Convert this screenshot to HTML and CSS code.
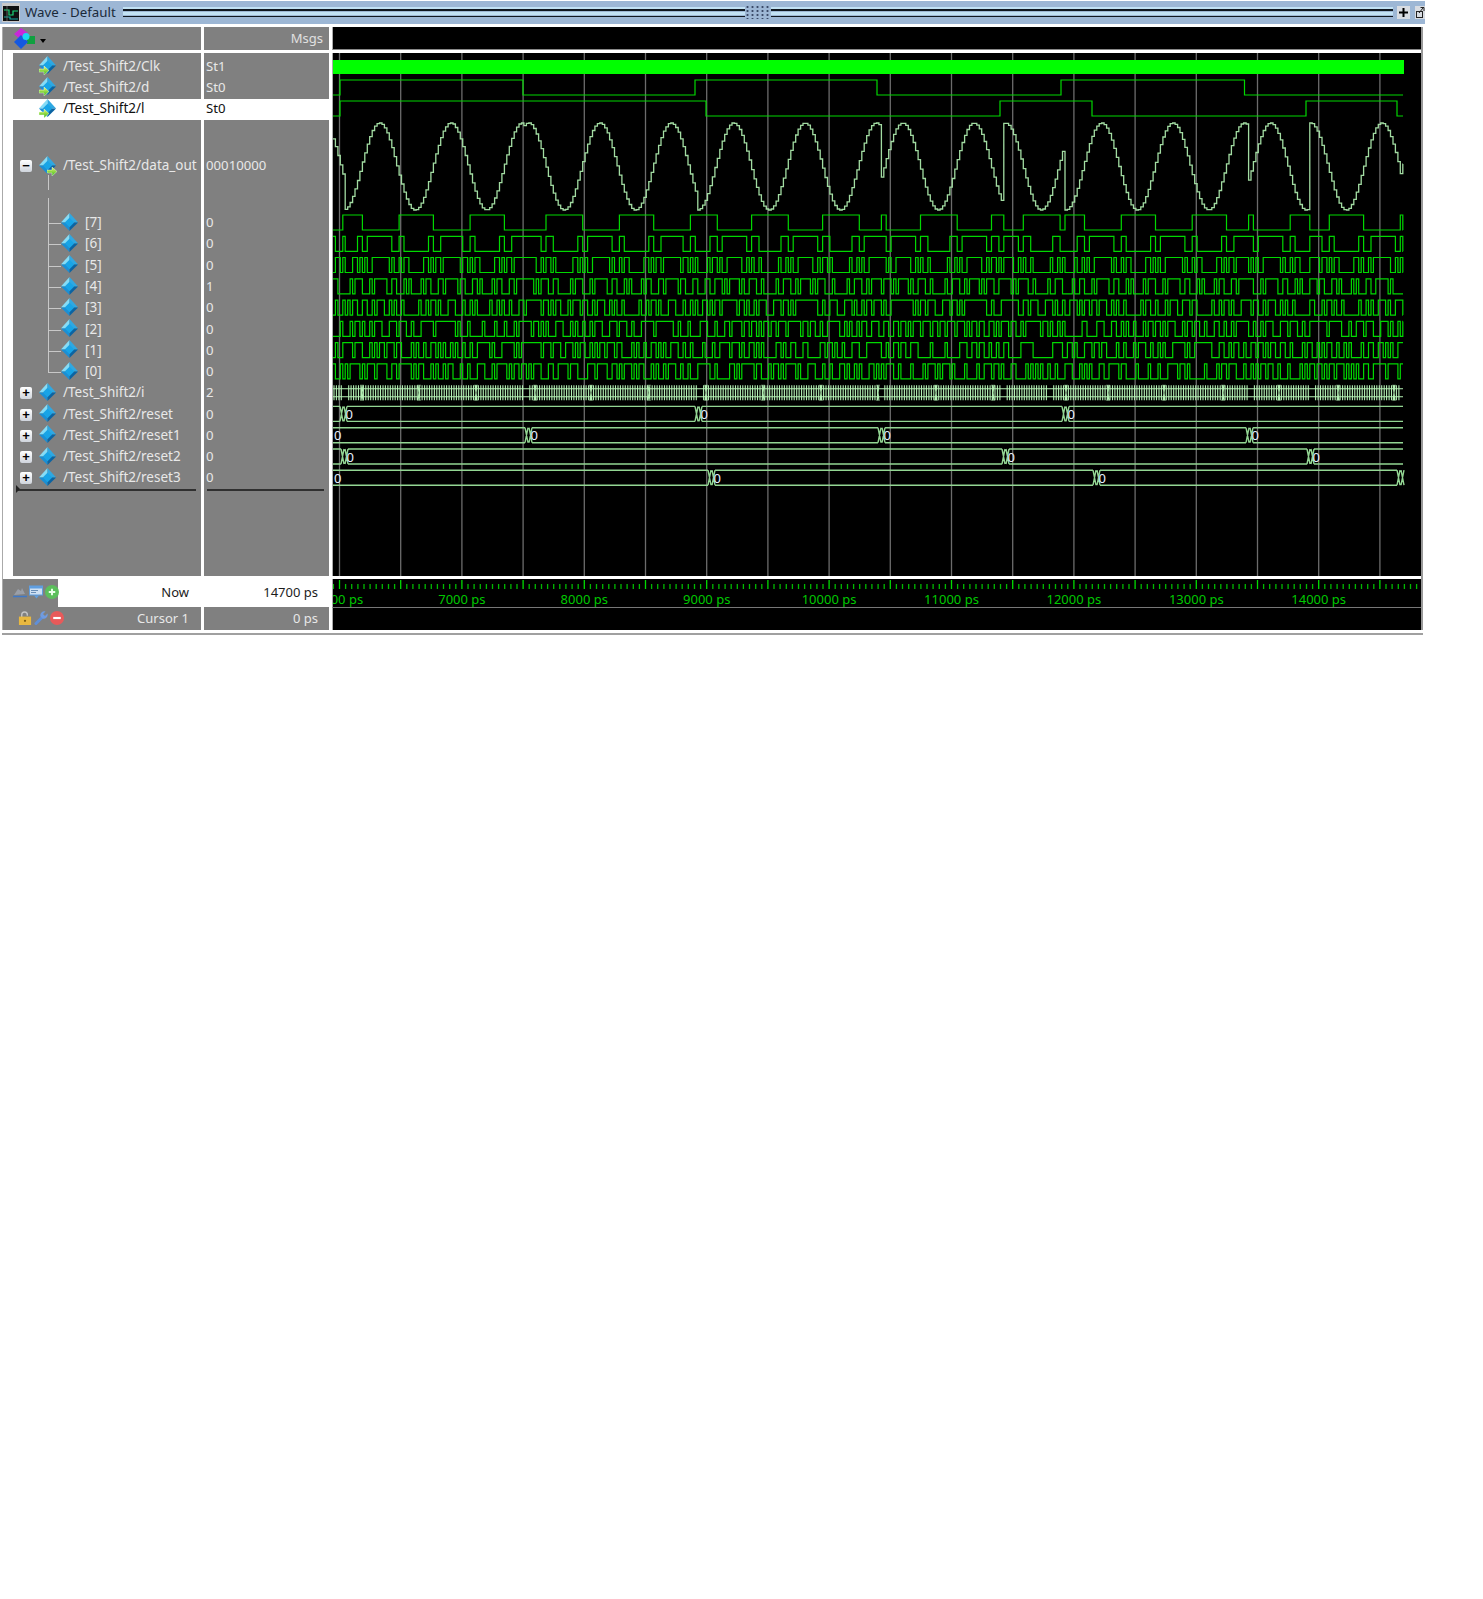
FILE: index.html
```html
<!DOCTYPE html>
<html lang="en">
<head>
    <meta charset="UTF-8">
    <title>Wave - Default</title>
    <link rel="stylesheet" href="styles.css">
</head>
<body>
    <svg class="defs" width="0" height="0">
        <defs>
            <linearGradient id="arrow-fill" x1="0" y1="0" x2="0" y2="1">
                <stop offset="0" stop-color="#e8f870"/>
                <stop offset="1" stop-color="#38b818"/>
            </linearGradient>
            <symbol id="diamond" viewBox="0 0 20 20">
                <polygon points="10,0 1,10 10,10" fill="#86dcf6"/>
                <polygon points="10,0 19,10 10,10" fill="#2fa8e2"/>
                <polygon points="1,10 10,19 10,10" fill="#1b8fd4"/>
                <polygon points="19,10 10,19 10,10" fill="#0c64a2"/>
                <polygon points="10,5 15,10 10,15 5,10" fill="#18a4e6"/>
            </symbol>
            <symbol id="arrow" viewBox="0 0 10 9">
                <path d="M0 3h5V0l5 4.500L5 9V6H0z" fill="url(#arrow-fill)" stroke="#f0fff0" stroke-width="0.400"/>
            </symbol>
        </defs>
    </svg>

    <div class="window">
        <header class="titlebar">
            <svg class="title-icon" viewBox="0 0 18 19">
                <rect width="18" height="19" fill="#c8c8c8"/>
                <rect x="1" y="3" width="16" height="15" fill="#101010"/>
                <path d="M2 7h5v5h4V8h5" fill="none" stroke="#18d878" stroke-width="1.200"/>
                <path d="M2 14h6v2h8" fill="none" stroke="#12a8a0" stroke-width="1.200"/>
                <path d="M5 3v15" stroke="#707070" stroke-width="0.800"/>
            </svg>
            <span class="title-text">Wave - Default</span>
            <div class="title-strip"><div class="grip"></div></div>
            <button class="title-btn plus-btn"><svg viewBox="0 0 13 13"><path d="M6.500 2v9M2 6.500h9" stroke="#000" stroke-width="2"/></svg></button>
            <button class="title-btn undock-btn"><svg viewBox="0 0 10 13"><rect x="1.500" y="5.500" width="6" height="6" fill="none" stroke="#222"/><path d="M4 7l4-5M5.500 1.500H9V5" fill="none" stroke="#222"/></svg></button>
        </header>

        <div class="panes">
            <div class="pane-row head-row">
                <div class="cell names-head">
                    <svg class="format-icon" viewBox="0 0 22 22">
                        <polygon points="7,0 14,5 7,12 0,6" fill="#c828d8"/>
                        <rect x="13" y="8" width="8" height="8" fill="#10a040"/>
                        <polygon points="7,7 14,14 7,21 0,14" fill="#1458e0"/>
                        <circle cx="12" cy="8.500" r="3.500" fill="#18d8f0"/>
                    </svg>
                    <span class="drop-caret"></span>
                </div>
                <div class="cell values-head">Msgs</div>
                <div class="cell wave-head"></div>
            </div>

            <div class="pane-row body-row">
                <div class="cell names">
                    <div class="row leaf"><svg class="sig-icon"><use href="#diamond"/></svg><svg class="in-arrow"><use href="#arrow"/></svg><span>/Test_Shift2/Clk</span></div>
                    <div class="row leaf"><svg class="sig-icon"><use href="#diamond"/></svg><svg class="in-arrow"><use href="#arrow"/></svg><span>/Test_Shift2/d</span></div>
                    <div class="row leaf selected"><svg class="sig-icon"><use href="#diamond"/></svg><svg class="in-arrow"><use href="#arrow"/></svg><span>/Test_Shift2/l</span></div>
                    <div class="row group tall">
                        <span class="expander">&minus;</span><svg class="sig-icon"><use href="#diamond"/></svg><svg class="out-arrow"><use href="#arrow"/></svg><span>/Test_Shift2/data_out</span>
                    </div>
                    <div class="row child"><svg class="sig-icon"><use href="#diamond"/></svg><span>[7]</span></div>
                    <div class="row child"><svg class="sig-icon"><use href="#diamond"/></svg><span>[6]</span></div>
                    <div class="row child"><svg class="sig-icon"><use href="#diamond"/></svg><span>[5]</span></div>
                    <div class="row child"><svg class="sig-icon"><use href="#diamond"/></svg><span>[4]</span></div>
                    <div class="row child"><svg class="sig-icon"><use href="#diamond"/></svg><span>[3]</span></div>
                    <div class="row child"><svg class="sig-icon"><use href="#diamond"/></svg><span>[2]</span></div>
                    <div class="row child"><svg class="sig-icon"><use href="#diamond"/></svg><span>[1]</span></div>
                    <div class="row child last"><svg class="sig-icon"><use href="#diamond"/></svg><span>[0]</span></div>
                    <div class="row group"><span class="expander">+</span><svg class="sig-icon"><use href="#diamond"/></svg><span>/Test_Shift2/i</span></div>
                    <div class="row group"><span class="expander">+</span><svg class="sig-icon"><use href="#diamond"/></svg><span>/Test_Shift2/reset</span></div>
                    <div class="row group"><span class="expander">+</span><svg class="sig-icon"><use href="#diamond"/></svg><span>/Test_Shift2/reset1</span></div>
                    <div class="row group"><span class="expander">+</span><svg class="sig-icon"><use href="#diamond"/></svg><span>/Test_Shift2/reset2</span></div>
                    <div class="row group"><span class="expander">+</span><svg class="sig-icon"><use href="#diamond"/></svg><span>/Test_Shift2/reset3</span></div>
                    <div class="end-line names-end"></div>
                </div>
                <div class="cell values">
                    <div class="row">St1</div>
                    <div class="row">St0</div>
                    <div class="row selected">St0</div>
                    <div class="row tall">00010000</div>
                    <div class="row">0</div>
                    <div class="row">0</div>
                    <div class="row">0</div>
                    <div class="row">1</div>
                    <div class="row">0</div>
                    <div class="row">0</div>
                    <div class="row">0</div>
                    <div class="row">0</div>
                    <div class="row">2</div>
                    <div class="row">0</div>
                    <div class="row">0</div>
                    <div class="row">0</div>
                    <div class="row">0</div>
                    <div class="end-line"></div>
                </div>
                <div class="cell wave-cell">
                    <svg id="waves" viewBox="333 53 1088 523"></svg>
                </div>
            </div>

            <div class="pane-row now-row">
                <div class="cell now-label">
                    <div class="now-icons">
                        <svg class="tool-icon" viewBox="0 0 14 12"><path d="M1 9l4-6 3 2 1-3 3 6z" fill="#9a9fa8"/><path d="M0 10.500h14" stroke="#3f78c8" stroke-width="1.500"/></svg>
                        <svg class="tool-icon" viewBox="0 0 14 13"><rect width="14" height="10" fill="#5f9ee0"/><rect x="1" y="3" width="12" height="6" fill="#cfe0f2"/><path d="M2 5h7M2 7h5" stroke="#6a8fb8"/><path d="M5 10h5l-2.500 3z" fill="#5f9ee0"/></svg>
                        <svg class="tool-icon" viewBox="0 0 13 13"><circle cx="6.500" cy="6.500" r="6.500" fill="#5cbf5c"/><path d="M6.500 3.500v6M3.500 6.500h6" stroke="#eaffea" stroke-width="1.800"/></svg>
                    </div>
                    <span class="time-label">Now</span>
                </div>
                <div class="cell now-value">14700 ps</div>
                <div class="cell ruler-cell"><svg id="ruler" viewBox="333 578 1088 28"></svg></div>
            </div>

            <div class="pane-row cursor-row">
                <div class="cell cursor-label">
                    <div class="cursor-icons">
                        <svg class="tool-icon" viewBox="0 0 13 15"><path d="M3 7V4a3 3 0 0 1 6 0v1" fill="none" stroke="#c4c4c4" stroke-width="1.500"/><rect y="6" width="13" height="9" fill="#e8b840"/><circle cx="6.500" cy="10.500" r="1.200" fill="#7a5a10"/></svg>
                        <svg class="tool-icon" viewBox="0 0 14 14"><path d="M2 12.500L8 6.500" stroke="#5f8fd8" stroke-width="3" stroke-linecap="round"/><path d="M6.500 5.500a4 4 0 0 1 5-5L9 3l2 2 2.500-2.500a4 4 0 0 1-5 5z" fill="#6f9be0"/></svg>
                        <svg class="tool-icon" viewBox="0 0 13 13"><circle cx="6.500" cy="6.500" r="6.500" fill="#e85a5a"/><path d="M3 6.500h7" stroke="#fff" stroke-width="2"/></svg>
                    </div>
                    <span class="time-label">Cursor 1</span>
                </div>
                <div class="cell cursor-value">0 ps</div>
                <div class="cell cursor-wave"></div>
            </div>
        </div>
        <div class="scroll-strip"></div>
    </div>
    <script src="waves.js"></script>
</body>
</html>
```

FILE: styles.css
```css
body {
    margin: 0;
    background: #fff;
    font-family: "Noto Sans", "Open Sans", sans-serif;
    font-size: 13px;
    color: #e8e8e8;
}

.defs {
    display: block;
    height: 0;
}

.window {
    width: 1425px;
    padding-top: 1px;
}

/* title bar */
.titlebar {
    display: flex;
    align-items: center;
    height: 23px;
    background: #9db7d5;
    padding-left: 2px;
}

.title-icon {
    width: 18px;
    height: 19px;
    flex: none;
}

.title-text {
    margin: 0 0 2px 5px;
    width: 98px;
    font-size: 13.300px;
    color: #1a2a3a;
}

.title-strip {
    flex: 1;
    height: 11px;
    margin-top: -1px;
    background: linear-gradient(#c2e2f4 0 2.500px, #101820 2.500px 4px, #9db7d5 4px 5px, #c2e2f4 5px 8px, #9db7d5 8px 9px, #101820 9px 10px, #9db7d5 10px);
    display: flex;
    justify-content: center;
}

.grip {
    width: 26px;
    height: 14px;
    margin-top: -2px;
    background-color: #9db7d5;
    background-image: radial-gradient(#3a4a68 1px, transparent 1.300px);
    background-size: 5px 4px;
}

.title-btn {
    width: 13px;
    height: 13px;
    padding: 0;
    border: none;
    background: #d8dce2;
    flex: none;
    margin-left: 4px;
}

.undock-btn {
    width: 10px;
    margin-left: 5px;
}

.title-btn svg {
    display: block;
    width: 100%;
    height: 100%;
}

/* panes */
.panes {
    margin: 3px 2px 0 2px;
    border-left: 1px solid #aaa;
    border-right: 2px solid #999;
    background: #fff;
}

.pane-row {
    display: grid;
    grid-template-columns: 198px 125px 1089px;
    column-gap: 3px;
}

.head-row {
    height: 23px;
    margin-bottom: 3px;
}

.body-row {
    height: 523px;
    margin-bottom: 3px;
}

.now-row {
    height: 28px;
}

.cursor-row {
    height: 23px;
}

.cell {
    background: #808080;
    box-sizing: border-box;
}

.names-head {
    display: flex;
    align-items: center;
    padding-left: 11px;
}

.format-icon {
    width: 22px;
    height: 22px;
}

.drop-caret {
    margin-left: 4px;
    margin-top: 4px;
    border-top: 4px solid #000;
    border-left: 3px solid transparent;
    border-right: 3px solid transparent;
}

.values-head {
    text-align: right;
    padding-right: 6px;
    line-height: 23px;
    color: #e0e0e0;
}

.wave-head,
.wave-cell,
.ruler-cell,
.cursor-wave {
    background: #000;
    border-left: 1px solid #aaa;
}

.wave-head {
    border-bottom: 1px solid #888;
}

#waves,
#ruler {
    display: block;
    width: 1088px;
}

#waves {
    height: 523px;
}

#ruler {
    height: 28px;
}

/* signal rows */
.names {
    border-left: 10px solid #fff;
    padding-top: 3px;
    font-size: 13.500px;
}

.values {
    padding-top: 3px;
    font-size: 13.200px;
}

.row {
    position: relative;
    display: flex;
    align-items: center;
    box-sizing: border-box;
    height: 21.270px;
    padding-bottom: 2px;
    white-space: nowrap;
}

.values .row {
    padding-left: 2px;
}

.row.tall {
    height: 92.800px;
}

.row.selected {
    background: #fff;
    color: #111;
}

.sig-icon {
    flex: none;
    width: 19px;
    height: 19px;
    margin-right: 6px;
}

.leaf {
    padding-left: 25px;
}

.group {
    padding-left: 7px;
}

.child {
    padding-left: 47px;
}

.expander {
    flex: none;
    width: 12px;
    height: 12px;
    margin-right: 6px;
    margin-top: 2px;
    border-radius: 2px;
    background: linear-gradient(#fff, #cfd4dc);
    color: #000;
    font: bold 13px/12px "Liberation Sans", sans-serif;
    text-align: center;
}

.in-arrow,
.out-arrow {
    position: absolute;
    width: 10px;
    height: 9px;
    top: 10px;
    left: 26px;
}

.tall .out-arrow {
    top: 47px;
    left: 34px;
}

/* tree lines */
.child::before {
    content: "";
    position: absolute;
    left: 35px;
    top: 0;
    width: 12px;
    height: 50%;
    border-left: 1px solid #c8c8c8;
    border-bottom: 1px solid #c8c8c8;
}

.child::after {
    content: "";
    position: absolute;
    left: 35px;
    top: 50%;
    bottom: 0;
    border-left: 1px solid #c8c8c8;
}

.child.last::after {
    display: none;
}

.group.tall::before {
    content: "";
    position: absolute;
    left: 35px;
    top: 55px;
    height: 15px;
    border-left: 1px solid #c8c8c8;
}

.group.tall::after {
    content: "";
    position: absolute;
    left: 35px;
    bottom: 0;
    height: 15px;
    border-left: 1px solid #c8c8c8;
}

.end-line {
    height: 1.500px;
    margin: 0 5px 0 3px;
    background: #303030;
}

.names-end {
    position: relative;
    margin: 0 5px 0 5px;
}

.names-end::before {
    content: "";
    position: absolute;
    left: -2px;
    top: -4px;
    border-left: 4px solid #222;
    border-top: 4px solid transparent;
    border-bottom: 4px solid transparent;
}

/* now and cursor rows */
.now-label,
.cursor-label,
.now-value,
.cursor-value {
    display: flex;
    align-items: center;
    justify-content: space-between;
    padding-right: 12px;
    padding-bottom: 2px;
}

.now-label,
.now-value {
    background: #fff;
    color: #1c1c1c;
}

.now-value,
.cursor-value {
    justify-content: flex-end;
    padding-right: 11px;
}

.now-icons {
    display: flex;
    align-items: center;
    gap: 2px;
    align-self: stretch;
    width: 55px;
    margin-bottom: -2px;
    padding: 0 0 2px 10px;
    box-sizing: border-box;
    background: #808080;
}

.cursor-icons {
    display: flex;
    align-items: center;
    gap: 2px;
    padding-left: 15px;
}

.tool-icon {
    width: 14px;
    height: 14px;
    flex: none;
}

.cursor-wave {
    border-top: 1px solid #777;
}

.scroll-strip {
    margin: 0 2px;
    width: 1421px;
    height: 5px;
    box-sizing: border-box;
    background: #fff;
    border-bottom: 2px solid #a0a0a0;
}

/* waveform strokes */
.grid-line {
    stroke: #6c6c6c;
    stroke-width: 1.300;
}

.sig {
    fill: none;
    stroke: #00d800;
    stroke-width: 1.200;
}

.clock-bar {
    fill: #00ff00;
}

.analog {
    fill: none;
    stroke: #a2dca2;
    stroke-width: 1.300;
}

.bus {
    fill: none;
    stroke: #93d693;
    stroke-width: 1.400;
}

.count-bus {
    fill: none;
    stroke: #b4f0b4;
    stroke-width: 1.100;
}

.bus-value {
    fill: #e8f0ff;
    font-size: 13px;
}

.tick {
    stroke: #00b800;
    stroke-width: 1.300;
}

.tick.major {
    stroke: #00dc00;
}

.ruler-label {
    fill: #00c800;
    font-size: 13px;
    text-anchor: middle;
}
```

FILE: waves.js
```js
// draws the traces: data_out is a stepped sine, the bit rows are its two's complement bits
const START = 333;
const END = 1403;
const STEP = 2.448;
const PERIOD = 71.3;
const BIT_TOPS = [215, 236.3, 257.5, 278.8, 300.1, 321.4, 342.6, 363.9];

// [x where the counter was reset, x of the next sine peak]
const segments = [
    [333, 323], [344, 379], [523, 528], [697, 733], [880, 902],
    [1002, 1005], [1063, 1101], [1247, 1270], [1308, 1310], [1398, 1420]
];

function sampleAt(x) {
    let peak = segments[0][1];
    for (const seg of segments) {
        if (x >= seg[0]) peak = seg[1];
    }
    return Math.round(127 * Math.cos(2 * Math.PI * (x - peak) / PERIOD));
}

const samples = [];
for (let x = START; x < END; x += STEP) {
    samples.push({ x: x, value: sampleAt(x) });
}

function stepPath(levelOf) {
    let last = levelOf(samples[0].value);
    let d = "M" + START + " " + last;
    for (const s of samples) {
        const y = levelOf(s.value);
        if (y !== last) {
            d += "H" + s.x.toFixed(1) + "V" + y;
            last = y;
        }
    }
    return d + "H" + END;
}

function togglePath(high, low, startsHigh, edges) {
    let level = startsHigh;
    let d = "M" + START + " " + (level ? high : low);
    for (const x of edges) {
        d += "H" + x;
        level = !level;
        d += "V" + (level ? high : low);
    }
    return d + "H" + END;
}

function crossing(x, top, bottom, w) {
    return "M" + x + " " + top + "L" + (x + w) + " " + bottom + "M" + x + " " + bottom + "L" + (x + w) + " " + top;
}

// one bus row: two rails with a pair of crossings at each change
function busRow(top, firstLabel, changes, endChange) {
    const bottom = top + 15;
    let d = "";
    let labels = "";
    let from = START;
    const points = changes.concat(endChange ? [endChange] : []);
    if (firstLabel) labels += '<text class="bus-value" x="334" y="' + (top + 12.5) + '">0</text>';
    for (const x of points) {
        d += "M" + from + " " + top + "H" + x + "M" + from + " " + bottom + "H" + x;
        d += crossing(x, top, bottom, 3) + crossing(x + 4, top, bottom, 3);
        from = x + 7;
        if (x !== endChange) {
            labels += '<text class="bus-value" x="' + (x + 5.5) + '" y="' + (top + 12.5) + '">0</text>';
        }
    }
    if (!endChange) d += "M" + from + " " + top + "H" + END + "M" + from + " " + bottom + "H" + END;
    return '<path class="bus" d="' + d + '"/>' + labels;
}

// the counter row /i changes on every sample, with longer holds at the resets
function countRow(top) {
    const bottom = top + 15;
    const holds = [345, 527, 700, 882, 1003, 1050, 1250, 1312, 1402];
    const breaks = [361, 418, 475, 534, 590, 648, 705, 762, 820, 877, 935, 992, 1065, 1107, 1163, 1222, 1278, 1337, 1393];
    let d = "";
    for (let x = START + 1; x < END; x += STEP) {
        if (holds.some((h) => Math.abs(h - x) < 2.5)) continue;
        d += "M" + x.toFixed(1) + " " + top + "V" + bottom;
    }
    d += "M" + START + " " + (top + 3.5) + "H" + END + "M" + START + " " + (bottom - 3.5) + "H" + END;
    for (const x of breaks) {
        d += crossing(x, top - 0.5, bottom + 0.5, 2);
    }
    return '<path class="count-bus" d="' + d + '"/>';
}

let html = "";

for (let k = 0; k < 18; k++) {
    const x = (339.5 + k * 61.2).toFixed(1);
    html += '<line class="grid-line" x1="' + x + '" x2="' + x + '" y1="53" y2="576"/>';
}

html += '<rect class="clock-bar" x="333" y="60" width="1071" height="14"/>';
html += '<path class="sig" d="' + togglePath(80, 95, false, [340, 523, 695, 877, 1061, 1244.5]) + '"/>';
html += '<path class="sig" d="' + togglePath(101, 116, false, [340, 706, 1000, 1092, 1306, 1397]) + '"/>';
html += '<path class="analog" d="' + stepPath((v) => (166.5 - v / 127 * 43.5).toFixed(1)) + '"/>';

BIT_TOPS.forEach((top, i) => {
    const bit = 7 - i;
    html += '<path class="sig" d="' + stepPath((v) => ((v & 255) >> bit) & 1 ? top : top + 15) + '"/>';
});

html += countRow(385.2);
html += busRow(406.4, false, [340, 695, 1062]);
html += busRow(427.7, true, [525, 878, 1246]);
html += busRow(449, false, [341, 1002, 1307]);
html += busRow(470.2, true, [708, 1093], 1397);

document.getElementById("waves").innerHTML = html;

let ruler = "";
for (let k = 0; k < 178; k++) {
    const x = (339.5 - 6.12 + k * 6.12).toFixed(1);
    const major = (k - 1) % 10 === 0;
    ruler += '<line class="tick' + (major ? " major" : "") + '" x1="' + x + '" x2="' + x + '" y1="' + (major ? 579 : 583) + '" y2="588"/>';
}
for (let k = 0; k < 9; k++) {
    ruler += '<text class="ruler-label" x="' + (339.5 + k * 122.4).toFixed(1) + '" y="603">' + (6000 + k * 1000) + " ps</text>";
}
document.getElementById("ruler").innerHTML = ruler;
```
